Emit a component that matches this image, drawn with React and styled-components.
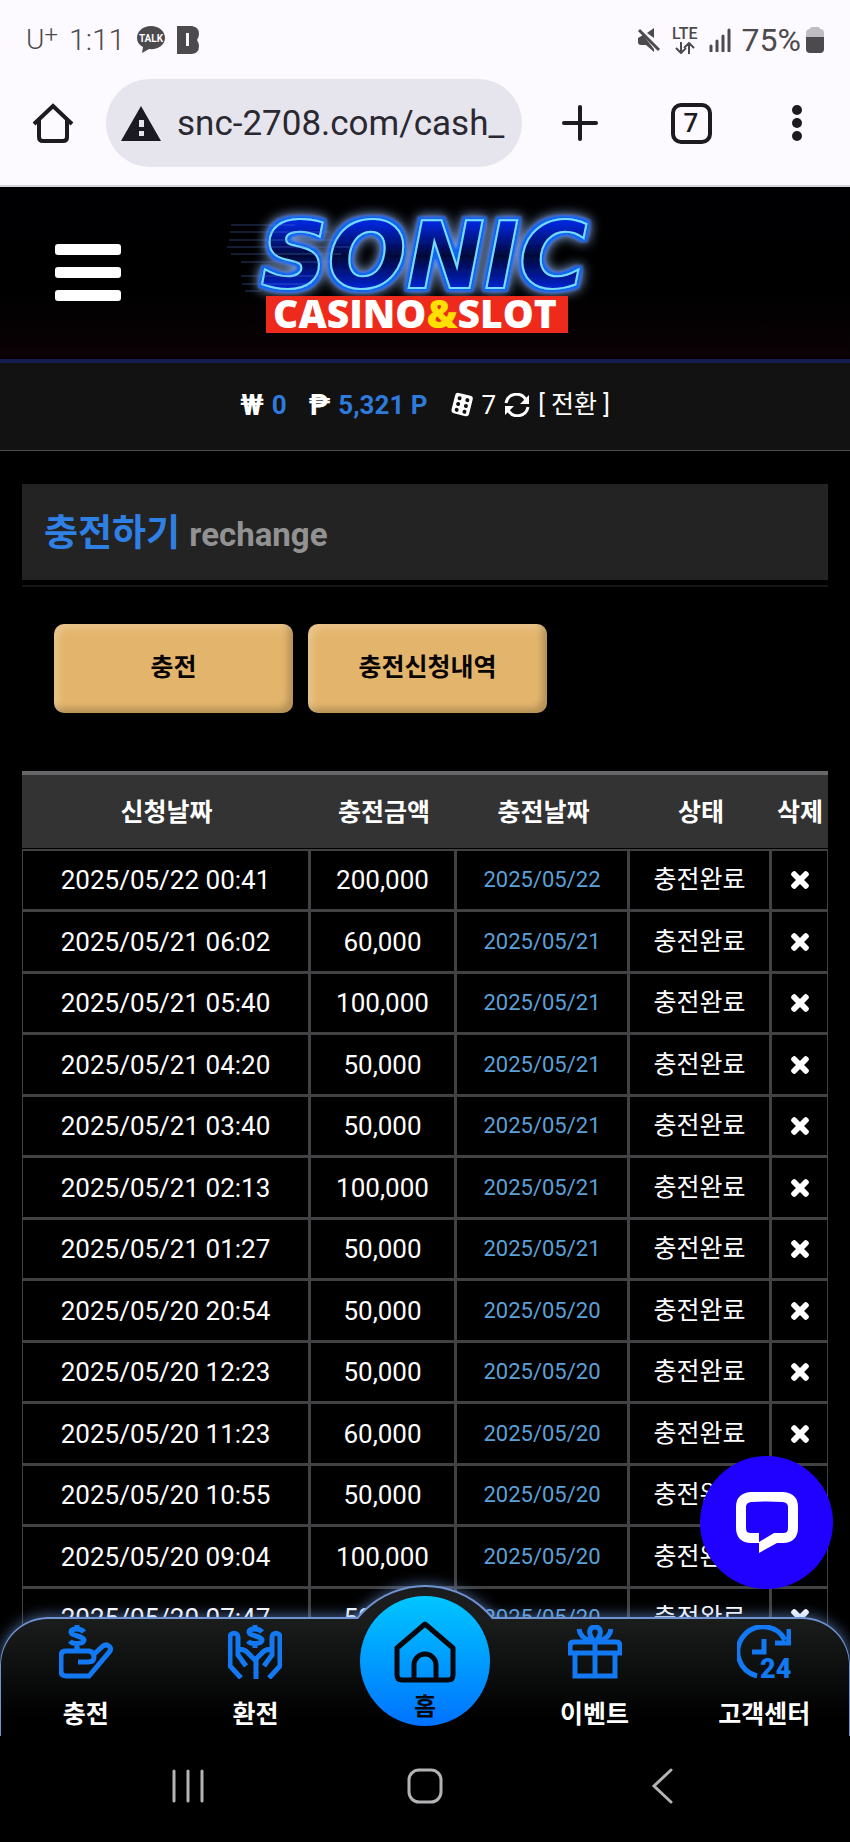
import React from "react";
import styled, { createGlobalStyle } from "styled-components";
import { FaTimes } from "react-icons/fa";

const rows = [
  ["2025/05/22 00:41", "200,000", "2025/05/22"],
  ["2025/05/21 06:02", "60,000", "2025/05/21"],
  ["2025/05/21 05:40", "100,000", "2025/05/21"],
  ["2025/05/21 04:20", "50,000", "2025/05/21"],
  ["2025/05/21 03:40", "50,000", "2025/05/21"],
  ["2025/05/21 02:13", "100,000", "2025/05/21"],
  ["2025/05/21 01:27", "50,000", "2025/05/21"],
  ["2025/05/20 20:54", "50,000", "2025/05/20"],
  ["2025/05/20 12:23", "50,000", "2025/05/20"],
  ["2025/05/20 11:23", "60,000", "2025/05/20"],
  ["2025/05/20 10:55", "50,000", "2025/05/20"],
  ["2025/05/20 09:04", "100,000", "2025/05/20"],
  ["2025/05/20 07:47", "50,000", "2025/05/20"],
];

function StatusBar() {
  return (
    <StatusWrap>
      <StatusGroup>
        <Carrier>
          U<sup>+</sup>
        </Carrier>
        <Clock>1:11</Clock>
        <svg width="30" height="28" viewBox="0 0 30 28">
          <path
            d="M15 0C7 0 1 5 1 12c0 4 2 7 6 9l-1 6 7-4c9 1 16-4 16-11S23 0 15 0z"
            fill="#4c4a4d"
          />
          <text
            x="15"
            y="16"
            textAnchor="middle"
            fontFamily="Roboto, sans-serif"
            fontWeight="700"
            fontSize="10"
            fill="#fcf9ff"
          >
            TALK
          </text>
        </svg>
        <svg width="22" height="28" viewBox="0 0 22 28">
          <path
            d="M0 0h15q7 1 7 8 0 3-2 6 2 3 2 6 0 8-8 8H0z"
            fill="#4c4a4d"
          />
          <rect x="9" y="7" width="3" height="13" fill="#fcf9ff" />
        </svg>
      </StatusGroup>
      <StatusGroup>
        <svg width="24" height="24" viewBox="0 0 24 24">
          <path d="M1 10l5-3 11 14v3l-8-7H4q-3 0-3-3z" fill="#4c4a4d" />
          <path d="M10 5l7-5v10z" fill="#4c4a4d" />
          <path d="M2 2l20 20" stroke="#4c4a4d" strokeWidth="3" />
        </svg>
        <Lte>
          LTE
          <svg width="20" height="12" viewBox="0 0 20 12">
            <path
              d="M6 0v11M1 6l5 5 5-5M14 12V1M9 6l5-5 5 5"
              fill="none"
              stroke="#4c4a4d"
              strokeWidth="2"
            />
          </svg>
        </Lte>
        <svg width="22" height="24" viewBox="0 0 22 24">
          <path
            d="M2 18v5M8 13v10M14 8v15M20 2v21"
            stroke="#4c4a4d"
            strokeWidth="3"
            strokeLinecap="round"
          />
        </svg>
        <Battery>
          75%
          <svg width="18" height="26" viewBox="0 0 18 26">
            <path d="M4 2q0-2 2-2h6q2 0 2 2 4 0 4 4v4H0V6q0-4 4-4z" fill="#bfbdc1" />
            <path d="M0 10h18v12q0 4-4 4H4q-4 0-4-4z" fill="#4c4a4d" />
          </svg>
        </Battery>
      </StatusGroup>
    </StatusWrap>
  );
}

function BrowserBar() {
  return (
    <BrowserWrap>
      <BarButton aria-label="home page">
        <svg width="42" height="42" viewBox="0 0 42 42" fill="none">
          <path
            d="M7 18v17q0 4 4 4h20q4 0 4-4V18M2 22L21 4l19 18"
            stroke="#1c1b20"
            strokeWidth="4"
          />
        </svg>
      </BarButton>
      <UrlPill>
        <svg width="40" height="35" viewBox="0 0 40 35">
          <path d="M20 0l20 35H0z" fill="#1b1a22" />
          <path d="M18 14h5v7h-5zM18 25h5v5h-5z" fill="#e6e5ed" />
        </svg>
        <UrlInput aria-label="address" defaultValue="snc-2708.com/cash_" />
      </UrlPill>
      <BarButton wide aria-label="new tab">
        <svg width="36" height="36" viewBox="0 0 36 36">
          <path
            d="M18 2v32M2 18h32"
            stroke="#1c1b20"
            strokeWidth="4"
            strokeLinecap="round"
          />
        </svg>
      </BarButton>
      <BarButton aria-label="tabs">
        <TabCount>7</TabCount>
      </BarButton>
      <BarButton aria-label="menu">
        <svg width="10" height="36" viewBox="0 0 10 36" fill="#1c1b20">
          <circle cx="5" cy="5" r="5" />
          <circle cx="5" cy="18" r="5" />
          <circle cx="5" cy="31" r="5" />
        </svg>
      </BarButton>
    </BrowserWrap>
  );
}

function Logo() {
  return (
    <LogoSvg viewBox="0 0 400 150" role="img" aria-label="SONIC CASINO&SLOT">
      <defs>
        <linearGradient id="neon" x1="0" y1="0" x2="0" y2="1">
          <stop offset="0.2" stopColor="#0426d8" />
          <stop offset="0.5" stopColor="#020638" />
          <stop offset="0.8" stopColor="#0424d0" />
        </linearGradient>
        <filter id="glow" x="-10%" y="-30%" width="120%" height="160%">
          <feMorphology in="SourceAlpha" operator="dilate" radius="3" result="fat" />
          <feFlood floodColor="#0a66ee" />
          <feComposite in2="fat" operator="in" result="edge" />
          <feGaussianBlur in="edge" stdDeviation="1" result="softEdge" />
          <feFlood floodColor="#8fb4ea" />
          <feComposite in2="fat" operator="in" />
          <feGaussianBlur stdDeviation="6" result="halo" />
          <feMerge>
            <feMergeNode in="halo" />
            <feMergeNode in="softEdge" />
            <feMergeNode in="SourceGraphic" />
          </feMerge>
        </filter>
      </defs>
      <text
        x="199"
        y="91"
        textAnchor="middle"
        fontFamily='"DejaVu Sans", sans-serif'
        fontWeight="700"
        fontStyle="italic"
        fontSize="93"
        fill="url(#neon)"
        stroke="#74dcff"
        strokeWidth="2"
        filter="url(#glow)"
      >
        SONIC
      </text>
      <g stroke="#5a80d8" opacity="0.45">
        <path d="M6 28h64M5 35h100M4 43h110M2 50h130M6 57h110M16 65h90M16 79h80M17 87h70M20 94h16" />
      </g>
      <rect x="41" y="99" width="302" height="37" fill="#ee2a1c" />
      <text
        x="190"
        y="131"
        textAnchor="middle"
        fontFamily='"Open Sans", sans-serif'
        fontWeight="800"
        fontSize="39"
        fill="#fff"
      >
        CASINO<tspan fill="#ffe000">&amp;</tspan>SLOT
      </text>
    </LogoSvg>
  );
}

function PointBar() {
  return (
    <PointWrap>
      <Point>
        <Sign>₩</Sign>
        <PointValue>0</PointValue>
      </Point>
      <Point>
        <Sign>₱</Sign>
        <PointValue>5,321 P</PointValue>
      </Point>
      <Point>
        <svg width="24" height="26" viewBox="0 0 24 26">
          <g transform="rotate(14 12 13)">
            <rect x="3" y="2" width="18" height="21" rx="3" fill="#fff" />
            <g fill="#101210">
              <circle cx="8" cy="7" r="2" />
              <circle cx="16" cy="7" r="2" />
              <circle cx="8" cy="13" r="2" />
              <circle cx="16" cy="13" r="2" />
              <circle cx="8" cy="19" r="2" />
              <circle cx="16" cy="19" r="2" />
            </g>
          </g>
        </svg>
        7
        <svg width="26" height="24" viewBox="0 0 26 24" fill="none">
          <path d="M2 10C4 0 17-2 22 7M24 14C22 24 9 26 4 17" stroke="#fff" strokeWidth="3" />
          <path d="M25 2v9h-9zM1 22v-9h9z" fill="#fff" />
        </svg>
        <Convert>[ 전환 ]</Convert>
      </Point>
    </PointWrap>
  );
}

function Dollar({ x }) {
  return (
    <path
      d={`M${x + 7} 7C${x + 4} 3 ${x - 6} 3 ${x - 6} 7s13 4 13 8-11 5-14 1M${x} 0v4M${x} 18v5`}
    />
  );
}

function BottomNav() {
  return (
    <NavBar>
      <BumpClip>
        <Bump />
      </BumpClip>
      <NavLink href="#charge">
        <NavIcon viewBox="0 0 54 54">
          <Dollar x={18} />
          <path d="M18 22v5M19 37h10q6 0 6-5t-5-6H7q-5 0-5 5v15q0 5 5 5h23l21-25c2-4-3-8-7-5L33 31" />
        </NavIcon>
        충전
      </NavLink>
      <NavLink href="#exchange">
        <NavIcon viewBox="0 0 54 54">
          <Dollar x={27} />
          <path d="M13 53L2 41V12c0-5 8-5 8 0v18l8 11M10 25q6-2 10 3l8 8v18" />
          <path d="M41 53l11-12V12c0-5-8-5-8 0v18l-8 11M44 25q-6-2-10 3l-7 7" />
        </NavIcon>
        환전
      </NavLink>
      <HomeSlot>
        <HomeLink href="#home">
          <svg width="62" height="62" viewBox="0 0 62 62" fill="none" stroke="#05070c" strokeWidth="5">
            <path
              d="M31 3l28 24v27q0 5-5 5H8q-5 0-5-5V27z"
              strokeLinejoin="round"
            />
            <path d="M20 59V44a11 11 0 0 1 22 0v15" />
          </svg>
          홈
        </HomeLink>
      </HomeSlot>
      <NavLink href="#event">
        <NavIcon viewBox="0 0 54 54">
          <path d="M2 28v-7q0-4 4-4h42q4 0 4 4v7zM7 28v23h40V28M27 17v34" />
          <path d="M27 17C19 9 21 2 27 2s8 7 0 15M11 4q1 9 12 12M43 4q-1 9-12 12" />
        </NavIcon>
        이벤트
      </NavLink>
      <NavLink href="#support">
        <NavIcon viewBox="0 0 54 54">
          <path d="M20 51A25 25 0 1 1 48 15M52 4v14H38M27 14v13H15" />
          <text
            x="23"
            y="53"
            fontFamily="Roboto, sans-serif"
            fontWeight="900"
            fontSize="27"
            fill="#1279f2"
            stroke="none"
          >
            24
          </text>
        </NavIcon>
        고객센터
      </NavLink>
    </NavBar>
  );
}

function App() {
  return (
    <Screen>
      <GlobalStyle />
      <StatusBar />
      <BrowserBar />
      <Site>
        <Scroller>
          <Header>
            <Burger aria-label="menu">
              <span />
              <span />
              <span />
            </Burger>
            <Logo />
          </Header>
          <PointBar />
          <Content>
            <Title>
              충전하기 <small>rechange</small>
            </Title>
            <Buttons>
              <GoldButton>충전</GoldButton>
              <GoldButton>충전신청내역</GoldButton>
            </Buttons>
            <Table>
              <colgroup>
                <col />
                <col width="146" />
                <col width="173" />
                <col width="142" />
                <col width="56" />
              </colgroup>
              <thead>
                <tr>
                  <th>신청날짜</th>
                  <th>충전금액</th>
                  <th>충전날짜</th>
                  <th>상태</th>
                  <th>삭제</th>
                </tr>
              </thead>
              <tbody>
                {rows.map(([requested, amount, charged]) => (
                  <tr key={requested}>
                    <td>{requested}</td>
                    <td>{amount}</td>
                    <DateCell>{charged}</DateCell>
                    <StateCell>충전완료</StateCell>
                    <td>
                      <DeleteButton aria-label="삭제">
                        <FaTimes />
                      </DeleteButton>
                    </td>
                  </tr>
                ))}
              </tbody>
            </Table>
          </Content>
        </Scroller>
        <ChatButton aria-label="chat">
          <svg width="62" height="62" viewBox="0 0 62 62">
            <path
              d="M23 46h-8Q5 46 5 36V15Q5 6 15 5q16-1 32 0 10 1 10 10v21q0 10-10 10h-8"
              fill="none"
              stroke="#fff"
              strokeWidth="10"
            />
            <path d="M23 50v11l18-10V41h-3z" fill="#fff" />
          </svg>
        </ChatButton>
        <BottomNav />
      </Site>
      <SystemNav>
        <SystemButton aria-label="recent apps">
          <svg width="34" height="34" viewBox="0 0 34 34">
            <path d="M3 2v30M17 2v30M31 2v30" stroke="#b4b2b5" strokeWidth="3" strokeLinecap="round" />
          </svg>
        </SystemButton>
        <SystemButton aria-label="home">
          <svg width="36" height="36" viewBox="0 0 36 36">
            <rect x="2" y="2" width="32" height="32" rx="10" fill="none" stroke="#b4b2b5" strokeWidth="3" />
          </svg>
        </SystemButton>
        <SystemButton aria-label="back">
          <svg width="22" height="36" viewBox="0 0 22 36">
            <path d="M20 2L3 18l17 16" fill="none" stroke="#b4b2b5" strokeWidth="3" strokeLinecap="round" />
          </svg>
        </SystemButton>
      </SystemNav>
    </Screen>
  );
}

export default App;

const GlobalStyle = createGlobalStyle`
  * {
    box-sizing: border-box;
  }
  body {
    margin: 0;
    background: #000;
    font-family: Roboto, "Noto Sans CJK KR", sans-serif;
  }
  button {
    padding: 0;
    border: 0;
    background: none;
    color: inherit;
    font: inherit;
    cursor: pointer;
  }
  svg {
    display: block;
    flex-shrink: 0;
  }
`;

const Screen = styled.div`
  display: flex;
  flex-direction: column;
  height: 100vh;
`;

const StatusWrap = styled.div`
  display: flex;
  align-items: center;
  justify-content: space-between;
  height: 79px;
  padding: 0 26px;
  background: #fcf9ff;
  color: #4c4a4d;
`;
const StatusGroup = styled.div`
  display: flex;
  align-items: center;
  gap: 11px;
`;
const Clock = styled.span`
  font-size: 30px;
  font-weight: 300;
  line-height: 40px;
`;
const Carrier = styled(Clock)`
  font-size: 28px;
  sup {
    font-size: 24px;
    line-height: 0;
    vertical-align: 6px;
  }
`;
const Battery = styled.span`
  display: flex;
  align-items: center;
  gap: 5px;
  font-size: 32px;
  line-height: 40px;
`;
const Lte = styled.span`
  display: flex;
  flex-direction: column;
  align-items: center;
  font-size: 16px;
  font-weight: 500;
  line-height: 16px;
`;

const BrowserWrap = styled.div`
  display: flex;
  align-items: center;
  height: 108px;
  padding-bottom: 18px;
  background: #fcf9ff;
  border-bottom: 2px solid #d8d6dc;
`;
const BarButton = styled.button.withConfig({
  shouldForwardProp: (prop) => prop !== "wide",
})`
  display: flex;
  align-items: center;
  justify-content: center;
  flex-shrink: 0;
  width: ${(props) => (props.wide ? 116 : 106)}px;
`;
const UrlPill = styled.label`
  display: flex;
  align-items: center;
  gap: 16px;
  flex: 1;
  min-width: 0;
  height: 88px;
  padding: 0 15px;
  border-radius: 44px;
  background: #e6e5ed;
`;
const UrlInput = styled.input`
  flex: 1;
  min-width: 0;
  padding: 0;
  border: 0;
  outline: 0;
  background: none;
  color: #2a2932;
  font: 400 35px Roboto, sans-serif;
`;
const TabCount = styled.span`
  width: 41px;
  height: 41px;
  border: 4px solid #1c1b20;
  border-radius: 10px;
  color: #1c1b20;
  font-size: 26px;
  font-weight: 500;
  line-height: 33px;
`;

const Site = styled.div`
  position: relative;
  flex: 1;
  min-height: 0;
  overflow: hidden;
`;
const Scroller = styled.main`
  height: 100%;
  overflow: hidden;
`;
const Header = styled.header`
  display: grid;
  grid-template-columns: 1fr auto 1fr;
  align-items: center;
  height: 176px;
  padding: 0 55px 2px;
  border-bottom: 4px solid #151d4e;
  background: linear-gradient(#000003, #000 60%, #0b0206);
`;
const LogoSvg = styled.svg`
  width: 400px;
  height: 150px;
  overflow: visible;
`;
const Burger = styled.button`
  display: flex;
  flex-direction: column;
  gap: 12px;
  width: 66px;
  span {
    height: 11px;
    border-radius: 3px;
    background: #fff;
  }
`;

const PointWrap = styled.div`
  display: flex;
  align-items: center;
  justify-content: center;
  gap: 22px;
  height: 88px;
  padding-bottom: 4px;
  border-bottom: 1px solid #4c4c4c;
  background: #111211;
  color: #fff;
  font-size: 26px;
`;
const Point = styled.span`
  display: flex;
  align-items: center;
  gap: 8px;
  line-height: 36px;
`;
const Sign = styled.b`
  font-size: 29px;
`;
const PointValue = styled.b`
  color: #2f7bdc;
`;
const Convert = styled.button`
  font-size: 25px;
`;

const Content = styled.section`
  padding: 33px 22px 120px;
`;
const Title = styled.h1`
  position: relative;
  margin: 0 0 44px;
  padding: 4px 22px 0;
  background: #232324;
  color: #2f80e4;
  font-size: 37px;
  font-weight: 700;
  line-height: 91px;
  small {
    color: #929292;
    font-size: 33px;
  }
  &::after {
    content: "";
    position: absolute;
    left: 0;
    right: 0;
    bottom: -7px;
    height: 2px;
    background: #161616;
  }
`;
const Buttons = styled.div`
  display: flex;
  gap: 15px;
  margin: 0 32px 58px;
`;
const GoldButton = styled.button`
  width: 239px;
  height: 89px;
  padding-bottom: 8px;
  border-radius: 10px;
  background: #e3b56c;
  box-shadow: inset 5px 5px 6px rgba(255, 255, 255, 0.2),
    inset -5px -5px 6px rgba(0, 0, 0, 0.2);
  color: #0a0505;
  font-size: 25px;
  font-weight: 700;
`;

const Table = styled.table`
  width: 100%;
  table-layout: fixed;
  border-collapse: separate;
  border-spacing: 0;
  color: #fff;
  text-align: center;
  th {
    height: 78px;
    padding: 0 0 3px;
    border-top: 4px solid #676668;
    border-bottom: 1px solid #000;
    background: #343334;
    font-size: 25px;
    font-weight: 700;
    white-space: nowrap;
  }
  td {
    height: 61px;
    padding: 0;
    border: solid #424143;
    border-width: 0 3px 3px 0;
    font-size: 26px;
    line-height: 32px;
  }
  td:first-child {
    border-left-width: 1px;
  }
  td:last-child {
    border-right-width: 1px;
  }
  tr:first-child td {
    height: 63px;
    border-top-width: 2px;
  }
  tr:nth-child(even) td {
    height: 62px;
  }
`;
const DateCell = styled.td`
  &&& {
    color: #5ba0d8;
    font-size: 22px;
  }
`;
const StateCell = styled.td`
  &&& {
    font-size: 25px;
  }
`;
const DeleteButton = styled.button`
  display: block;
  margin: 0 auto;
  font-size: 24px;
  svg {
    stroke: currentColor;
    stroke-width: 30px;
  }
`;

const ChatButton = styled.button`
  position: absolute;
  right: 17px;
  bottom: 147px;
  display: flex;
  align-items: center;
  justify-content: center;
  width: 133px;
  height: 133px;
  border-radius: 50%;
  background: #2000ff;
`;

const NavBar = styled.nav`
  position: absolute;
  left: 0;
  right: 0;
  bottom: 0;
  display: grid;
  grid-template-columns: repeat(5, 1fr);
  height: 119px;
  border: 2px solid #6f93d2;
  border-width: 2px 1px 0;
  border-radius: 48px 48px 0 0;
  background: linear-gradient(#1b1d1d, #000 85%);
  box-shadow: 0 -1px 14px rgba(120, 165, 240, 0.6);
`;
/* keeps only the part of the circle that rises over the bar */
const BumpClip = styled.div`
  position: absolute;
  left: 50%;
  top: -54px;
  display: flex;
  justify-content: center;
  width: 220px;
  height: 54px;
  padding-top: 20px;
  overflow: hidden;
  transform: translateX(-50%);
`;
const Bump = styled.div`
  flex-shrink: 0;
  width: 176px;
  height: 176px;
  border: 2px solid #6f93d2;
  border-radius: 50%;
  background: #1b1c1e;
  box-shadow: 0 0 14px rgba(120, 165, 240, 0.6);
`;
const NavLink = styled.a`
  display: flex;
  flex-direction: column;
  align-items: center;
  gap: 18px;
  padding-top: 6px;
  color: #fff;
  font-size: 25px;
  font-weight: 700;
  line-height: 36px;
  text-decoration: none;
`;
const NavIcon = styled.svg`
  width: 54px;
  height: 54px;
  fill: none;
  stroke: #1279f2;
  stroke-width: 5;
`;
const HomeSlot = styled.div`
  position: relative;
`;
const HomeLink = styled.a`
  position: absolute;
  left: 50%;
  bottom: 10px;
  display: flex;
  flex-direction: column;
  align-items: center;
  gap: 10px;
  width: 130px;
  height: 130px;
  padding-top: 25px;
  border-radius: 50%;
  background: linear-gradient(#00c6ff, #0072ff);
  color: #05070c;
  font-size: 24px;
  font-weight: 700;
  line-height: 28px;
  text-decoration: none;
  transform: translateX(-50%);
`;

const SystemNav = styled.footer`
  display: grid;
  grid-template-columns: repeat(3, 1fr);
  align-items: center;
  height: 106px;
  padding: 0 69px 6px;
`;
const SystemButton = styled.button`
  display: flex;
  justify-content: center;
`;
